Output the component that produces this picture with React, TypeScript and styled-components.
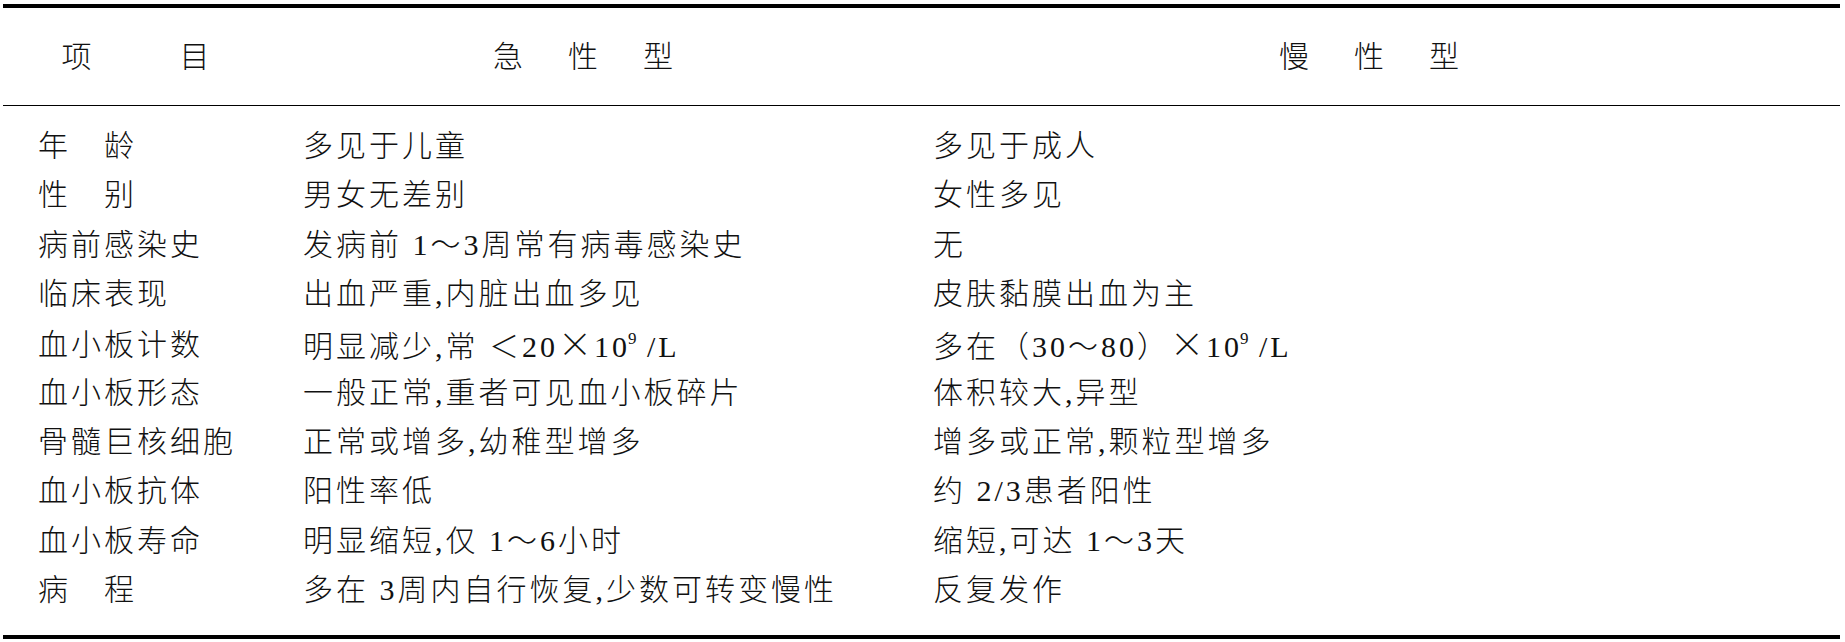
import React from "react";
import styled, { createGlobalStyle } from "styled-components";

const GlobalStyle = createGlobalStyle`
  html, body {
    margin: 0;
    padding: 0;
    background: #ffffff;
  }
  body {
    font-family: "Liberation Serif", "Noto Sans CJK SC", serif;
    color: #111111;
  }
`;

const Page = styled.div`
  width: 1845px;
  height: 642px;
  padding: 4px 5px 0 3px;
  box-sizing: border-box;
`;

const Table = styled.div`
  border-top: 4px solid #000;
  border-bottom: 4px solid #000;
`;

const Columns = `
  display: grid;
  grid-template-columns: 265px 630px 1fr;
`;

const HeaderRow = styled.div`
  ${Columns}
  height: 97px;
  border-bottom: 1px solid #000;
  align-items: center;
`;

const HeaderCell = styled.div<{ $gap: number; $shift?: number }>`
  display: flex;
  justify-content: center;
  gap: ${(p) => p.$gap}px;
  font-family: "Noto Sans CJK SC", sans-serif;
  font-weight: 300;
  font-size: 30px;
  line-height: 30px;
  padding-bottom: 6px;
  padding-left: ${(p) => p.$shift ?? 0}px;
`;

const Body = styled.div`
  padding: 15px 0 21px;
`;

const Row = styled.div`
  ${Columns}
  height: 49.3px;
  align-items: center;
`;

const Cell = styled.div`
  padding-left: 35px;
  font-size: 30px;
  line-height: 49px;
  letter-spacing: 3px;
  font-weight: 300;
  white-space: nowrap;
`;

const Sup = styled.sup`
  font-size: 17px;
  line-height: 0;
  vertical-align: 13px;
  letter-spacing: 0;
  margin-left: -2px;
`;

const Times = styled.span`
  font-family: "Noto Sans CJK SC", sans-serif;
  font-size: 34px;
  font-weight: 200;
  letter-spacing: 2px;
`;

type RowData = { label: string; acute: React.ReactNode; chronic: React.ReactNode };

const rows: RowData[] = [
  { label: "年　龄", acute: "多见于儿童", chronic: "多见于成人" },
  { label: "性　别", acute: "男女无差别", chronic: "女性多见" },
  { label: "病前感染史", acute: "发病前 1～3周常有病毒感染史", chronic: "无" },
  { label: "临床表现", acute: "出血严重,内脏出血多见", chronic: "皮肤黏膜出血为主" },
  {
    label: "血小板计数",
    acute: (
      <>
        明显减少,常 ＜20<Times>×</Times>10<Sup>9</Sup> /L
      </>
    ),
    chronic: (
      <>
        多在（30～80）<Times>×</Times>10<Sup>9</Sup> /L
      </>
    ),
  },
  { label: "血小板形态", acute: "一般正常,重者可见血小板碎片", chronic: "体积较大,异型" },
  { label: "骨髓巨核细胞", acute: "正常或增多,幼稚型增多", chronic: "增多或正常,颗粒型增多" },
  { label: "血小板抗体", acute: "阳性率低", chronic: "约 2/3患者阳性" },
  { label: "血小板寿命", acute: "明显缩短,仅 1～6小时", chronic: "缩短,可达 1～3天" },
  { label: "病　程", acute: "多在 3周内自行恢复,少数可转变慢性", chronic: "反复发作" },
];

export default function App() {
  return (
    <>
      <GlobalStyle />
      <Page>
        <Table>
          <HeaderRow>
            <HeaderCell $gap={88} $shift={0}>
              <span>项</span>
              <span>目</span>
            </HeaderCell>
            <HeaderCell $gap={45}>
              <span>急</span>
              <span>性</span>
              <span>型</span>
            </HeaderCell>
            <HeaderCell $gap={45}>
              <span>慢</span>
              <span>性</span>
              <span>型</span>
            </HeaderCell>
          </HeaderRow>
          <Body>
            {rows.map((r) => (
              <Row key={r.label}>
                <Cell>{r.label}</Cell>
                <Cell>{r.acute}</Cell>
                <Cell>{r.chronic}</Cell>
              </Row>
            ))}
          </Body>
        </Table>
      </Page>
    </>
  );
}
